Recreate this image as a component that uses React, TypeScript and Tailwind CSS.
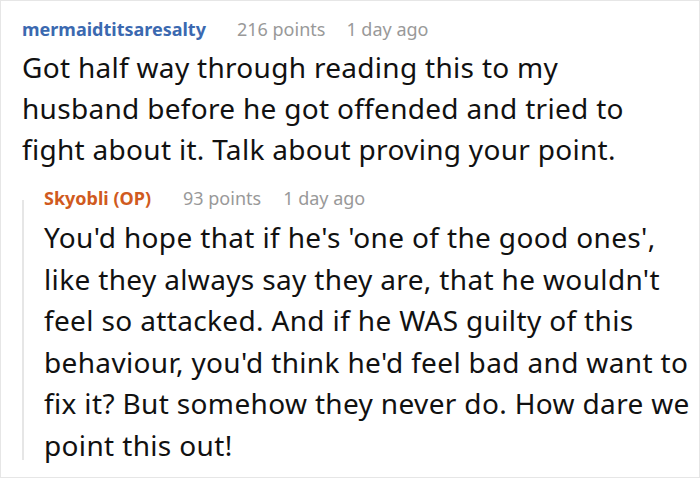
export default function App() {
  return (
    <div className="w-[700px] h-[478px] bg-white border border-[#e6e6e6] overflow-hidden font-['Noto_Sans',sans-serif]">
      <div className="pl-[21px] pt-[16px]">
        <div className="flex items-baseline text-[18px] leading-[24px]">
          <span className="font-bold text-[#3b69b0]">mermaidtitsaresalty</span>
          <span className="ml-[31px] text-[#999999]">216 points</span>
          <span className="ml-[21px] text-[#999999]">1 day ago</span>
        </div>
        <p className="mt-[6px] max-w-[620px] text-[28px] leading-[41px] tracking-[0.3px] text-[#111111]">
          Got half way through reading this to my husband before he got offended and tried to fight about it. Talk about proving your point.
        </p>
        <div className="mt-[16px] flex">
          <div className="mt-[14px] mb-[6px] w-[2px] shrink-0 bg-[#e6e6e6]" />
          <div className="pl-[20px] min-w-0">
            <div className="flex items-baseline text-[18px] leading-[24px]">
              <span className="font-bold text-[#d05a20]">Skyobli (OP)</span>
              <span className="ml-[32px] text-[#999999]">93 points</span>
              <span className="ml-[22px] text-[#999999]">1 day ago</span>
            </div>
            <p className="mt-[7px] text-[28px] leading-[41.5px] tracking-[0.35px] text-[#111111]">
              You'd hope that if he's 'one of the good ones', like they always say they are, that he wouldn't feel so attacked. And if he WAS guilty of this behaviour, you'd think he'd feel bad and want to fix it? But somehow they never do. How dare we point this out!
            </p>
          </div>
        </div>
      </div>
    </div>
  );
}
